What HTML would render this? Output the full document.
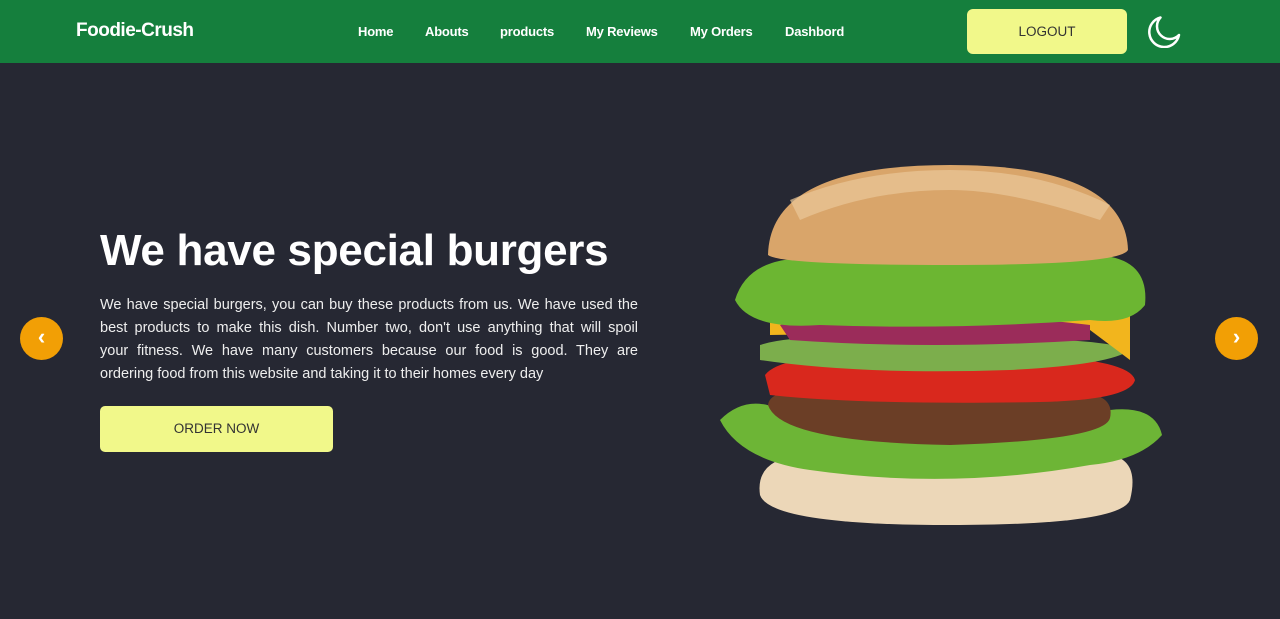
<!DOCTYPE html>
<html><head><meta charset="utf-8"><style>
*{margin:0;padding:0;box-sizing:border-box}
body{width:1280px;height:619px;overflow:hidden;background:#262833;font-family:"Liberation Sans",sans-serif;position:relative}
.nav{position:absolute;left:0;top:0;width:1280px;height:63px;background:#157f3d}
.logo{position:absolute;left:76px;top:20px;color:#fff;font-weight:bold;font-size:19px;letter-spacing:-0.5px}
.links a{position:absolute;top:24px;color:#fff;font-weight:bold;font-size:13px;text-decoration:none;letter-spacing:-0.2px}
.logout{position:absolute;left:967px;top:9px;width:160px;height:45px;background:#f1f88a;border-radius:6px;color:#333;font-size:13.5px;text-align:center;line-height:45px}
h1{position:absolute;left:100px;top:226px;color:#fff;font-size:44px;font-weight:bold;letter-spacing:-0.3px}
.p{position:absolute;left:100px;top:294px;width:538px;color:#eee;font-size:14.5px;line-height:23px}
.p div{text-align:justify;text-align-last:justify;white-space:nowrap}
.p div.l{text-align-last:left}
.order{position:absolute;left:100px;top:406px;width:233px;height:46px;background:#f1f88a;border-radius:5px;color:#333;font-size:13.5px;text-align:center;line-height:46px}
.arr{position:absolute;top:317px;width:43px;height:43px;border-radius:50%;background:#f29f05;color:#fff;font-weight:bold;font-size:22px;text-align:center;line-height:40px}
</style></head><body>
<div class="nav">
<div class="logo">Foodie-Crush</div>
<div class="links"><a style="left:358px">Home</a><a style="left:425px">Abouts</a><a style="left:500px">products</a><a style="left:586px">My Reviews</a><a style="left:690px">My Orders</a><a style="left:785px">Dashbord</a></div>
<div class="logout">LOGOUT</div>
<svg style="position:absolute;left:1146px;top:14px" width="36" height="34" viewBox="0 0 36 34"><path d="M14.5 3.5 A15 15 0 1 0 33 21 A11 11 0 0 1 14.5 3.5 Z" fill="none" stroke="#fff" stroke-width="2.5" stroke-linejoin="round"/></svg>
</div>
<h1>We have special burgers</h1>
<div class="p">
<div style="white-space:normal">We have special burgers, you can buy these products from us. We have used the</div>
<div style="white-space:normal">best products to make this dish. Number two, don't use anything that will spoil</div>
<div style="white-space:normal">your fitness. We have many customers because our food is good. They are</div>
<div class="l">ordering food from this website and taking it to their homes every day</div>
</div>
<div class="order">ORDER NOW</div>
<div class="arr" style="left:20px">‹</div>
<div class="arr" style="left:1215px">›</div>
<svg style="position:absolute;left:710px;top:160px" width="460" height="370" viewBox="0 0 460 370">
<path d="M50 335 Q45 300 90 295 L400 295 Q430 300 420 340 Q410 365 240 365 Q60 365 50 335Z" fill="#ecd7b8"/>
<path d="M10 260 Q40 230 80 255 Q150 240 240 255 Q330 240 400 250 Q445 245 452 275 Q430 300 380 305 Q240 330 100 310 Q30 300 10 260Z" fill="#6db536"/>
<path d="M58 245 Q60 228 110 230 L370 232 Q405 235 400 258 Q395 280 240 285 Q70 282 58 245Z" fill="#6b3e26"/>
<path d="M55 215 Q70 195 160 195 L320 195 Q420 200 425 220 Q420 240 330 242 Q150 245 60 235Z" fill="#d9281d"/>
<path d="M50 185 Q80 175 160 178 L300 178 Q400 180 420 190 Q400 205 300 210 Q150 215 50 200Z" fill="#7cae4c"/>
<path d="M60 150 L420 150 L420 200 L380 170 L60 175Z" fill="#f2b51d"/>
<path d="M70 165 Q120 150 200 160 Q250 150 380 165 L380 180 Q220 190 80 180Z" fill="#9b2c5a"/>
<path d="M25 140 Q40 90 120 100 Q240 80 380 95 Q440 95 435 145 Q420 165 380 160 Q240 170 110 165 Q40 170 25 140Z" fill="#6cb632"/>
<path d="M58 95 Q60 5 240 5 Q415 5 418 90 Q410 105 240 105 Q70 105 58 95Z" fill="#d9a56a"/>
<path d="M80 40 Q150 10 240 10 Q330 10 400 45 L390 60 Q300 30 240 30 Q160 30 90 60Z" fill="#e9c79a" opacity=".7"/>
</svg>
</body></html>
